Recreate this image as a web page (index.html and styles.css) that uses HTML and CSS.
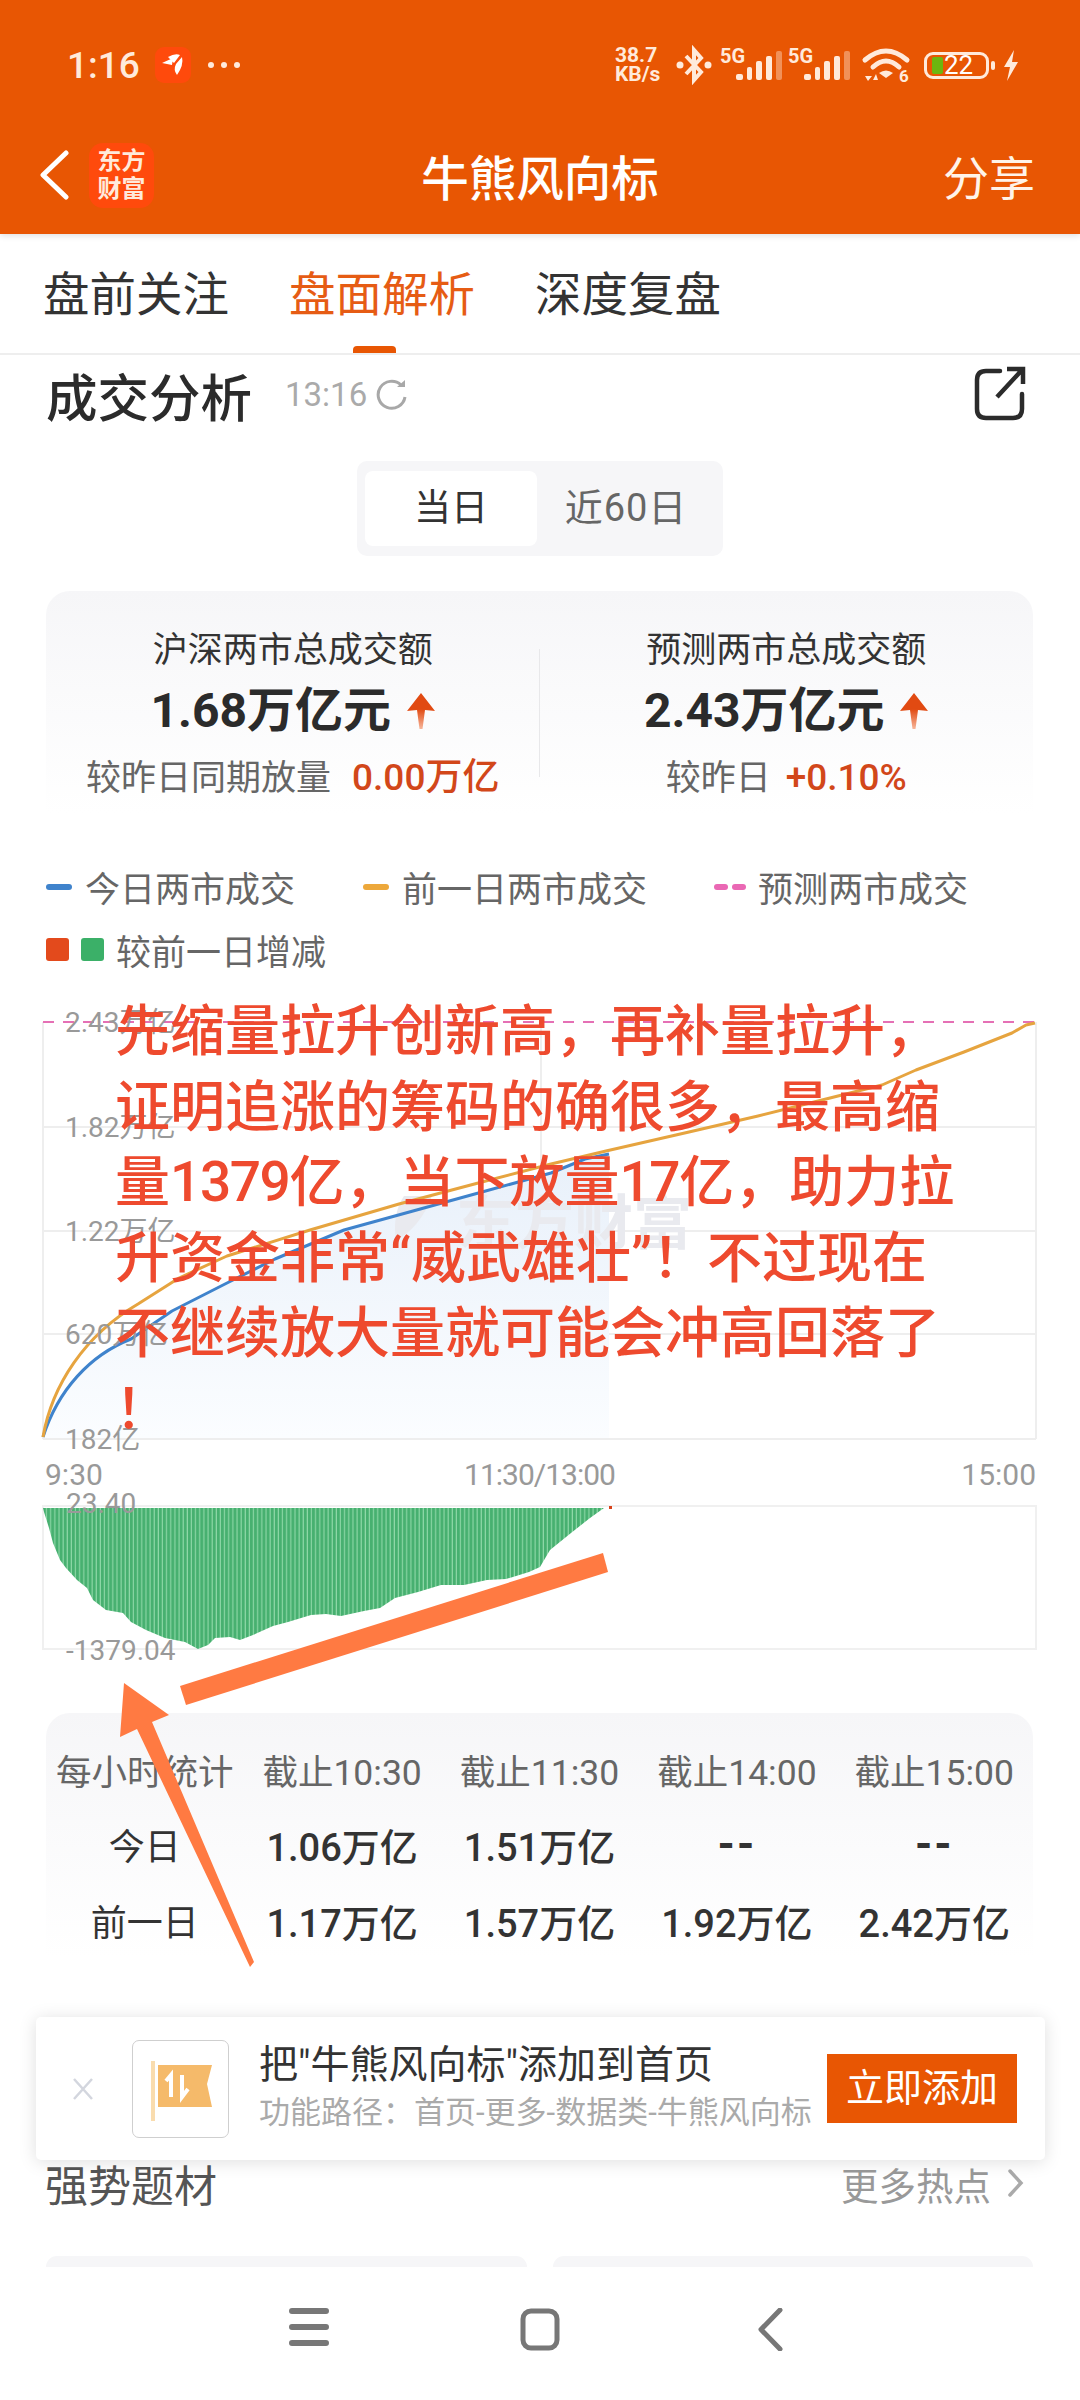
FILE: index.html
```html
<!DOCTYPE html>
<html lang="zh-CN">
<head>
    <meta charset="UTF-8">
    <meta name="viewport" content="width=device-width, initial-scale=1.0">
    <title>牛熊风向标</title>
    <link rel="stylesheet" href="styles.css">
</head>
<body>
<div class="page">

    <!-- 顶部橙色区域 -->
    <header class="appbar">
        <div class="statusbar">
            <div class="status-left">
                <span class="clock">1:16</span>
                <span class="app-dot">
                    <svg width="26" height="26" viewBox="0 0 26 26"><path d="M2 11 L13 6 L12 13 Z M8 5 Q15 1 20 3 L14 11 Z M16 12 L22 5 Q24 13 17 23 Q13 18 16 12 Z" fill="#fff"/></svg>
                </span>
                <span class="more-dots"><i></i><i></i><i></i></span>
            </div>
            <div class="status-right">
                <span class="speed">38.7<br>KB/s</span>
                <svg class="bt" width="36" height="40" viewBox="0 0 36 40"><path d="M10 11 L25 27 L18 35 L18 5 L25 13 L10 29" fill="none" stroke="#ffeadb" stroke-width="4"/><circle cx="4" cy="20" r="3.5" fill="#ffeadb"/><circle cx="32" cy="20" r="3.5" fill="#ffeadb"/></svg>
                <svg class="sim" width="62" height="36" viewBox="0 0 62 36"><text x="0" y="16" class="sim-text">5G</text><rect x="16" y="27" width="7" height="6" rx="2"/><rect x="27" y="20" width="5" height="13" rx="2"/><rect x="36" y="14" width="6" height="19" rx="2"/><rect x="46" y="9" width="6" height="24" rx="2"/><rect x="56" y="4" width="6" height="29" rx="2" opacity="0.4"/></svg>
                <svg class="sim" width="62" height="36" viewBox="0 0 62 36"><text x="0" y="16" class="sim-text">5G</text><rect x="16" y="27" width="7" height="6" rx="2"/><rect x="27" y="20" width="5" height="13" rx="2"/><rect x="36" y="14" width="6" height="19" rx="2"/><rect x="46" y="9" width="6" height="24" rx="2"/><rect x="56" y="4" width="6" height="29" rx="2" opacity="0.4"/></svg>
                <svg class="wifi" width="46" height="36" viewBox="0 0 46 36"><path d="M2 13 Q23 -5 44 13 M10 20 Q23 8 36 20" fill="none" stroke="#ffeadb" stroke-width="5" stroke-linecap="round"/><path d="M16 26 Q23 21 30 26 L23 31 Z" fill="#ffeadb"/><path d="M2 29 L9 29 L5 34 Z M10 33 L13 27 L15 33 Z" fill="#ffeadb"/><text x="36" y="35" class="wifi-text">6</text></svg>
                <div class="battery">
                    <div class="battery-body"><span class="battery-fill"></span><span class="battery-num">22</span></div>
                    <span class="battery-nub"></span>
                </div>
                <svg class="bolt" width="16" height="31" viewBox="0 0 16 31"><path d="M11 0 L1 17 L7 17 L4 31 L15 12 L9 12 Z" fill="#ffeadb"/></svg>
            </div>
        </div>
        <nav class="navrow">
            <div class="nav-left">
                <svg width="30" height="50" viewBox="0 0 30 50"><path d="M27 3 L4 25 L27 47" fill="none" stroke="#fff" stroke-width="5" stroke-linecap="round" stroke-linejoin="round"/></svg>
                <div class="brand">东方<br>财富</div>
            </div>
            <div class="nav-title">牛熊风向标</div>
            <div class="nav-share">分享</div>
        </nav>
    </header>

    <div class="tabs">
        <span class="tab">盘前关注</span>
        <span class="tab active">盘面解析</span>
        <span class="tab">深度复盘</span>
    </div>

    <!-- 成交分析 -->
    <div class="section-head">
        <div class="section-left">
            <span class="section-title">成交分析</span>
            <span class="section-time">13:16</span>
            <svg width="32" height="32" viewBox="0 0 32 32"><path d="M25 7 A13.5 13.5 0 1 0 29 19" fill="none" stroke="#a8a8a8" stroke-width="3"/><path d="M21 9 L29 9 L29 2 Z" fill="#a8a8a8"/></svg>
        </div>
        <svg width="52" height="56" viewBox="0 0 52 56"><path d="M26 5 L12 5 Q3 5 3 14 L3 43 Q3 52 12 52 L39 52 Q48 52 48 43 L48 28" fill="none" stroke="#2b2b2b" stroke-width="4.5" stroke-linecap="round"/><path d="M23 31 L47 5 M33 3 L49 3 L49 18" fill="none" stroke="#2b2b2b" stroke-width="4.5"/></svg>
    </div>

    <div class="segment">
        <span class="seg-item active">当日</span>
        <span class="seg-item">近60日</span>
    </div>

    <div class="summary">
        <div class="summary-col">
            <div class="sum-label">沪深两市总成交额</div>
            <div class="sum-value">1.68万亿元
                <svg class="up" width="28" height="36" viewBox="0 0 28 36"><path d="M14 0 L28 18 L18 17 L15.5 36 L12.5 36 L10 17 L0 18 Z" fill="url(#upFade)"/><defs><linearGradient id="upFade" x1="0" y1="0" x2="0" y2="1"><stop offset="0.45" stop-color="#e14a12"/><stop offset="1" stop-color="#f7b79c"/></linearGradient></defs></svg>
            </div>
            <div class="sum-sub">较昨日同期放量<b>0.00万亿</b></div>
        </div>
        <div class="summary-col">
            <div class="sum-label">预测两市总成交额</div>
            <div class="sum-value">2.43万亿元
                <svg class="up" width="28" height="36" viewBox="0 0 28 36"><path d="M14 0 L28 18 L18 17 L15.5 36 L12.5 36 L10 17 L0 18 Z" fill="url(#upFade)"/></svg>
            </div>
            <div class="sum-sub">较昨日<b class="near">+0.10%</b></div>
        </div>
    </div>

    <div class="legend">
        <div class="legend-row">
            <span class="legend-item w-one"><i class="dash blue"></i>今日两市成交</span>
            <span class="legend-item w-two"><i class="dash orange"></i>前一日两市成交</span>
            <span class="legend-item"><i class="dash pink"></i><i class="dash pink short"></i>预测两市成交</span>
        </div>
        <div class="legend-row">
            <span class="legend-item"><i class="sq red"></i><i class="sq green"></i>较前一日增减</span>
        </div>
    </div>

    <!-- 分时成交图 -->
    <svg class="chart-main" width="1080" height="460" viewBox="0 1000 1080 460">
        <defs>
            <linearGradient id="blueFade" x1="0" y1="0" x2="0" y2="1">
                <stop offset="0" stop-color="#e8f0fa"/>
                <stop offset="1" stop-color="#fbfdff"/>
            </linearGradient>
        </defs>
        <path d="M43 1127H1036 M43 1231H1036 M43 1334H1036 M43 1439H1036 M43 1022V1439 M541 1022V1439 M1036 1022V1439" stroke="#eeeeee" stroke-width="2" fill="none"/>
        <path d="M43 1437 C58 1390 90 1355 131 1339 L172 1311 L227 1283 L275 1259 L344 1230 L413 1211 L482 1192 L551 1173 L585 1159 L609 1154 L609 1438 L43 1438 Z" fill="url(#blueFade)"/>
        <path d="M404 1196 Q392 1214 396 1240 Q420 1228 432 1196 Z" fill="#e9eaef"/>
        <text x="456" y="1244" class="watermark">东方财富</text>
        <line x1="43" y1="1022" x2="1036" y2="1022" stroke="#e570b5" stroke-width="2" stroke-dasharray="11 9"/>
        <path class="line-blue" d="M43 1437 C58 1390 90 1355 131 1339 L172 1311 L227 1283 L275 1259 L344 1230 L413 1211 L482 1192 L551 1173 L585 1159 L609 1154"/>
        <path class="line-orange" d="M43 1437 C52 1385 85 1335 138 1304 L179 1278 L227 1256 L310 1230 L399 1204 L482 1182 L551 1164 L606 1151 L689 1132 L758 1116 L826 1099 L882 1085 L916 1070 L964 1052 L1012 1033 L1026 1025 L1035 1023"/>
        <text x="65" y="1032" class="axis">2.43万亿</text>
        <text x="65" y="1137" class="axis">1.82万亿</text>
        <text x="65" y="1241" class="axis">1.22万亿</text>
        <text x="65" y="1344" class="axis">620万亿</text>
        <text x="65" y="1449" class="axis">182亿</text>
    </svg>

    <div class="xaxis">
        <span>9:30</span>
        <span class="xaxis-mid">11:30/13:00</span>
        <span class="xaxis-end">15:00</span>
    </div>

    <svg class="chart-bars" width="1080" height="180" viewBox="0 1490 1080 180">
        <defs>
            <pattern id="barStripes" patternUnits="userSpaceOnUse" x="43" y="0" width="4.14" height="10">
                <rect width="4.14" height="10" fill="#8fd8a8"/>
                <rect width="3" height="10" fill="#47b070"/>
            </pattern>
        </defs>
        <rect x="43" y="1506" width="993" height="143" fill="none" stroke="#f0f0f0" stroke-width="2"/>
        <polygon fill="url(#barStripes)" points="43,1508 44,1512 49,1528 53,1543 60,1560 66,1568 77,1580 87,1588 93,1600 106,1610 123,1613 131,1622 146,1630 165,1638 185,1642 198,1649 208,1645 215,1638 230,1637 240,1640 253,1635 273,1626 288,1622 311,1615 326,1614 341,1616 364,1611 380,1608 395,1598 418,1592 441,1585 464,1585 487,1580 506,1579 529,1572 540,1567 550,1550 571,1533 590,1518 604,1508"/>
        <rect x="609" y="1506" width="3" height="3" fill="#d8431a"/>
        <text x="66" y="1513" class="axis">23.40</text>
        <text x="66" y="1660" class="axis">-1379.04</text>
    </svg>

    <!-- 每小时统计 -->
    <div class="hourly">
        <div class="hourly-row head">
            <span>每小时统计</span><span>截止10:30</span><span>截止11:30</span><span>截止14:00</span><span>截止15:00</span>
        </div>
        <div class="hourly-row">
            <span class="row-name">今日</span><span>1.06万亿</span><span>1.51万亿</span><span class="nil">--</span><span class="nil">--</span>
        </div>
        <div class="hourly-row">
            <span class="row-name">前一日</span><span>1.17万亿</span><span>1.57万亿</span><span>1.92万亿</span><span>2.42万亿</span>
        </div>
    </div>

    <div class="topic-head">
        <span class="topic-title">强势题材</span>
        <span class="topic-more">更多热点
            <svg width="17" height="28" viewBox="0 0 17 28"><path d="M3 2 L14 14 L3 26" fill="none" stroke="#aaa" stroke-width="3.5" stroke-linecap="round"/></svg>
        </span>
    </div>
    <div class="topic-cards"><div></div><div></div></div>

    <div class="sysnav">
        <svg width="40" height="38" viewBox="0 0 40 38"><path d="M3 3H37 M3 19H37 M3 35H37" stroke="#777" stroke-width="6" stroke-linecap="round"/></svg>
        <svg width="40" height="43" viewBox="0 0 40 43"><rect x="3" y="3" width="34" height="37" rx="8" fill="none" stroke="#777" stroke-width="5"/></svg>
        <svg class="sysnav-back" width="26" height="43" viewBox="0 0 26 43"><path d="M23 2 L4 21.5 L23 41" fill="none" stroke="#777" stroke-width="5" stroke-linecap="round" stroke-linejoin="round"/></svg>
    </div>

    <!-- 悬浮提示条 -->
    <div class="promo">
        <svg class="promo-x" width="22" height="22" viewBox="0 0 22 22"><path d="M2 1 L20 21 M20 1 L2 21" stroke="#d3d6de" stroke-width="2.5"/></svg>
        <div class="promo-icon">
            <svg width="64" height="62" viewBox="0 0 64 62"><rect x="0" y="0" width="4" height="60" fill="#f9dcae"/><path d="M7 4 H61 L56 23 L61 46 H7 Z" fill="#f5ba6a"/><path d="M20 36 V14 L15 20 M31 14 V36 L37 28" fill="none" stroke="#fff" stroke-width="4"/></svg>
        </div>
        <div class="promo-text">
            <div class="promo-title">把"牛熊风向标"添加到首页</div>
            <div class="promo-sub">功能路径：首页-更多-数据类-牛熊风向标</div>
        </div>
        <div class="promo-btn">立即添加</div>
    </div>

    <!-- 截图上的标注 -->
    <svg class="marks" width="1080" height="2400" viewBox="0 0 1080 2400">
        <polygon points="603,1553 608,1572 186,1705 180,1686"/>
        <polygon points="124,1683 169,1715 152,1722 254,1962 250,1967 137,1729 120,1737"/>
    </svg>
    <div class="note">
        <div>先缩量拉升创新高，再补量拉升，</div>
        <div>证明追涨的筹码的确很多，最高缩</div>
        <div>量<span class="note-num">1379</span>亿，当下放量<span class="note-num">17</span>亿，助力拉</div>
        <div>升资金非常“威武雄壮”！不过现在</div>
        <div>不继续放大量就可能会冲高回落了</div>
        <div>！</div>
    </div>

</div>
</body>
</html>
```

FILE: styles.css
```css
* {
    box-sizing: border-box;
}

body {
    margin: 0;
    padding: 0;
    background: #fff;
    font-family: Roboto, "Noto Sans CJK SC", sans-serif;
    color: #333;
}

.page {
    position: relative;
    width: 1080px;
    height: 2400px;
    overflow: hidden;
}

/* 顶部 */
.appbar {
    position: relative;
    z-index: 2;
    height: 234px;
    background-color: #e85603;
    box-shadow: 0 2px 6px rgba(0, 0, 0, 0.12);
    color: #fff;
}

.statusbar {
    height: 130px;
    padding: 0 61px 0 67px;
    display: flex;
    align-items: center;
    justify-content: space-between;
}

.status-left {
    display: flex;
    align-items: center;
}

.clock {
    font-size: 37px;
    font-weight: 500;
    color: #ffeadb;
    width: 88px;
}

.app-dot {
    width: 36px;
    height: 36px;
    border-radius: 9px;
    background: #ff4a0c;
    display: flex;
    align-items: center;
    justify-content: center;
}

.more-dots {
    display: flex;
    gap: 7px;
    margin-left: 17px;
}

.more-dots i {
    width: 6px;
    height: 6px;
    border-radius: 50%;
    background: #ffeadb;
}

.status-right {
    display: flex;
    align-items: center;
    color: #ffeadb;
}

.speed {
    font-size: 21px;
    font-weight: 700;
    line-height: 19px;
    width: 51px;
    margin-right: 10px;
    white-space: nowrap;
}

.bt {
    margin-right: 8px;
}

.sim {
    margin-right: 6px;
    fill: #ffeadb;
    overflow: visible;
}

.sim-text {
    font-size: 20px;
    font-weight: 700;
}

.wifi {
    margin-left: 7px;
    margin-right: 15px;
    overflow: visible;
}

.wifi-text {
    font-size: 17px;
    font-weight: 700;
    fill: #ffeadb;
}

.battery {
    display: flex;
    align-items: center;
    margin-right: 8px;
}

.battery-body {
    width: 65px;
    height: 27px;
    border: 3px solid #ffeadb;
    border-radius: 9px;
    display: flex;
    align-items: center;
    padding-left: 5px;
}

.battery-fill {
    width: 11px;
    height: 17px;
    background: #6cb60f;
    border-radius: 2px;
}

.battery-num {
    font-size: 26px;
    line-height: 21px;
    color: #fff;
    margin-left: 1px;
}

.battery-nub {
    width: 4px;
    height: 9px;
    margin-left: 2px;
    background: #ffeadb;
    border-radius: 2px;
}

.navrow {
    position: relative;
    height: 90px;
    padding: 0 45px 0 39px;
    display: flex;
    align-items: center;
    justify-content: space-between;
}

.nav-left {
    display: flex;
    align-items: center;
    gap: 20px;
}

.brand {
    width: 65px;
    height: 65px;
    border-radius: 14px;
    background: #ff4a0c;
    color: #ffeadb;
    font-size: 24px;
    font-weight: 700;
    line-height: 28px;
    text-align: center;
    padding-top: 4px;
}

.nav-title {
    position: absolute;
    left: 0;
    right: 0;
    text-align: center;
    font-size: 47.5px;
    font-weight: 500;
}

.nav-share {
    font-size: 46px;
    color: #fff3e9;
}

/* 标签 */
.tabs {
    height: 121px;
    padding-left: 43px;
    border-bottom: 2px solid #eeeeee;
    display: flex;
    gap: 60px;
}

.tab {
    position: relative;
    height: 119px;
    line-height: 122px;
    font-size: 46.5px;
    color: #333;
}

.tab.active {
    color: #e65c14;
}

.tab.active::after {
    content: "";
    position: absolute;
    left: 64px;
    bottom: 0;
    width: 43px;
    height: 7px;
    border-radius: 4px 4px 0 0;
    background: #e85603;
}

.section-head {
    height: 82px;
    padding: 0 54px 4px 46px;
    display: flex;
    align-items: center;
    justify-content: space-between;
}

.section-left {
    display: flex;
    align-items: center;
}

.section-title {
    font-size: 51.5px;
    font-weight: 500;
    color: #2b2b2b;
}

.section-time {
    font-size: 33px;
    color: #aaa;
    margin: 0 9px 0 33px;
}

.segment {
    width: 366px;
    height: 95px;
    margin: 24px auto 0;
    padding: 10px 8px;
    background: #f6f6f8;
    border-radius: 10px;
    display: flex;
}

.seg-item {
    flex: 1;
    text-align: center;
    line-height: 75px;
    font-size: 38px;
    letter-spacing: 1px;
    color: #666;
}

.seg-item.active {
    flex: none;
    width: 172px;
    background: #fff;
    border-radius: 8px;
    font-size: 37px;
    letter-spacing: 0;
    color: #333;
}

/* 总成交额 */
.summary {
    position: relative;
    width: 987px;
    height: 224px;
    margin: 35px 0 0 46px;
    padding-top: 38px;
    border-radius: 24px 24px 0 0;
    background: linear-gradient(#f6f6f8, #fff);
    display: flex;
}

.summary::after {
    content: "";
    position: absolute;
    left: 493px;
    top: 58px;
    width: 1px;
    height: 128px;
    background: #e8e8ea;
}

.summary-col {
    width: 50%;
    text-align: center;
}

.sum-label {
    height: 44px;
    line-height: 44px;
    font-size: 35px;
    color: #333;
}

.sum-value {
    height: 76px;
    line-height: 76px;
    font-size: 48px;
    font-weight: 700;
    color: #2b2b2b;
}

.up {
    vertical-align: -2px;
    margin-left: 4px;
}

.sum-sub {
    height: 50px;
    padding-top: 4px;
    line-height: 50px;
    font-size: 35px;
    color: #666;
}

.sum-sub b {
    font-size: 37px;
    font-weight: 500;
    color: #d2471a;
    margin-left: 21px;
}

.sum-sub b.near {
    margin-left: 15px;
}

/* 图例 */
.legend {
    margin: 40px 0 0 46px;
    height: 145px;
}

.legend-row {
    height: 63px;
    display: flex;
    align-items: center;
    font-size: 35px;
    color: #666;
}

.legend-item {
    display: flex;
    align-items: center;
}

.w-one {
    width: 317px;
}

.w-two {
    width: 351px;
}

.dash {
    width: 26px;
    height: 6px;
    border-radius: 3px;
    margin-right: 13px;
}

.dash.blue {
    background: #3f83cc;
}

.dash.orange {
    background: #eda83b;
}

.dash.pink {
    width: 14px;
    margin-right: 4px;
    background: #ea68b4;
}

.dash.pink.short {
    margin-right: 12px;
}

.sq {
    width: 23px;
    height: 23px;
    border-radius: 3px;
    margin-right: 12px;
}

.sq.red {
    background: #e34a1c;
}

.sq.green {
    background: #3bb068;
}

/* 图表 */
.chart-main,
.chart-bars {
    display: block;
    overflow: visible;
}

.line-blue,
.line-orange {
    fill: none;
    stroke-width: 3;
    stroke-linejoin: round;
}

.line-blue {
    stroke: #3f83cc;
}

.line-orange {
    stroke: #e6a43f;
}

.axis {
    font-size: 28px;
    fill: #999;
}

.watermark {
    font-size: 59px;
    font-weight: 700;
    fill: #e9eaef;
}

.xaxis {
    height: 30px;
    line-height: 30px;
    padding: 0 44px 0 45px;
    display: grid;
    grid-template-columns: 1fr auto 1fr;
    font-size: 30px;
    color: #999;
}

.xaxis-mid {
    letter-spacing: -1px;
    padding-right: 2px;
}

.xaxis-end {
    text-align: right;
}

/* 每小时统计 */
.hourly {
    width: 987px;
    height: 244px;
    margin: 43px 0 0 46px;
    padding-top: 19px;
    border-radius: 24px 24px 0 0;
    background: linear-gradient(#f6f6f8, #fff);
}

.hourly-row {
    height: 76px;
    display: grid;
    grid-template-columns: repeat(5, 1fr);
    align-items: center;
    text-align: center;
    font-size: 38px;
    font-weight: 500;
    color: #333;
}

.hourly-row.head {
    height: 74px;
    font-size: 35.5px;
    font-weight: 400;
    color: #666;
}

.row-name {
    font-size: 36px;
    font-weight: 400;
}

.nil {
    font-size: 44px;
    font-weight: 700;
    letter-spacing: 2px;
}

/* 强势题材 */
.topic-head {
    height: 60px;
    margin-top: 196px;
    padding: 0 56px 0 45px;
    display: flex;
    align-items: center;
    justify-content: space-between;
}

.topic-title {
    font-size: 43px;
    color: #555;
}

.topic-more {
    display: flex;
    align-items: center;
    gap: 16px;
    font-size: 37.5px;
    color: #999;
}

.topic-cards {
    height: 11px;
    margin-top: 43px;
    padding: 0 47px 0 46px;
    display: flex;
    gap: 26px;
}

.topic-cards div {
    flex: 1;
    background: #f6f6f8;
    border-radius: 24px 24px 0 0;
}

.sysnav {
    height: 133px;
    padding-top: 41px;
    display: flex;
    align-items: flex-start;
    background: #fff;
    margin-left: 289px;
    gap: 191px;
}

.sysnav-back {
    margin-left: 6px;
}

/* 悬浮提示条 */
.promo {
    position: absolute;
    left: 36px;
    top: 2017px;
    width: 1009px;
    height: 143px;
    background: #fff;
    border-radius: 5px;
    box-shadow: 0 2px 18px rgba(0, 0, 0, 0.13);
    display: flex;
    align-items: center;
}

.promo-x {
    margin-left: 36px;
}

.promo-icon {
    width: 97px;
    height: 98px;
    margin-left: 38px;
    border: 1px solid #cfcfcf;
    border-radius: 7px;
    padding: 20px 0 0 18px;
}

.promo-text {
    margin-left: 30px;
    width: 568px;
}

.promo-title {
    font-size: 39px;
    line-height: 48px;
    color: #333;
}

.promo-sub {
    font-size: 31px;
    line-height: 48px;
    color: #aaa;
    white-space: nowrap;
}

.promo-btn {
    width: 190px;
    height: 69px;
    line-height: 69px;
    text-align: center;
    font-size: 38px;
    color: #fff;
    background: #e85603;
}

/* 标注 */
.marks {
    position: absolute;
    left: 0;
    top: 0;
    fill: #ff7a42;
}

.note {
    position: absolute;
    left: 115px;
    top: 994px;
    font-size: 55px;
    font-weight: 500;
    line-height: 75.6px;
    color: #ee4a2e;
    white-space: nowrap;
}

.note-num {
    letter-spacing: -1.4px;
}
```
